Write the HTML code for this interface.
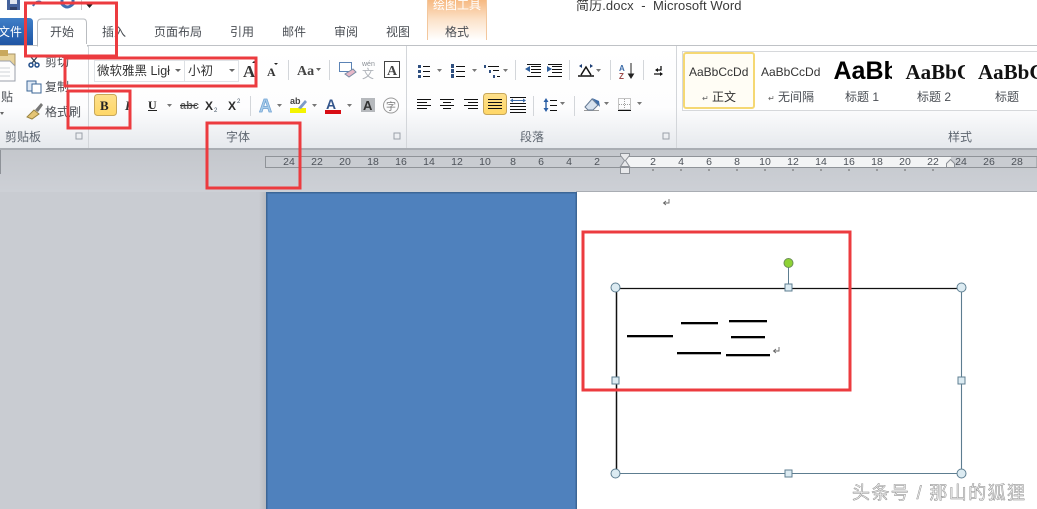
<!DOCTYPE html>
<html><head><meta charset="utf-8">
<style>
html,body{margin:0;padding:0;width:1037px;height:509px;overflow:hidden;background:#fff}
svg{display:block}
text{font-family:"Liberation Sans","Noto Sans CJK SC",sans-serif;fill:#4a4e54;font-size:12px}
.d{fill:#333}
.g{fill:#5e6670}
.l{stroke:#111;stroke-width:1;transform:translateY(.5px)}
.r{fill:none;stroke:#ec3b3f;stroke-width:3}
.h{fill:#dcebf2;stroke:#5f7f92;stroke-width:1}
.t{font-size:10.5px;fill:#4c5158;text-anchor:middle}
.sep{stroke:#d3d6da;stroke-width:1}
</style></head><body>
<svg width="1037" height="509" viewBox="0 0 1037 509" xmlns="http://www.w3.org/2000/svg">
<defs>
<linearGradient id="rb" x1="0" y1="0" x2="0" y2="1"><stop offset="0" stop-color="#fff"/><stop offset=".6" stop-color="#fdfdfe"/><stop offset="1" stop-color="#e6e9ed"/></linearGradient>
<linearGradient id="bg" x1="0" y1="0" x2="0" y2="1"><stop offset="0" stop-color="#c4c7cc"/><stop offset="1" stop-color="#cdd0d6"/></linearGradient>
<linearGradient id="file" x1="0" y1="0" x2="0" y2="1"><stop offset="0" stop-color="#3f7fc8"/><stop offset="1" stop-color="#1f55a3"/></linearGradient>
<linearGradient id="ctx" x1="0" y1="0" x2="0" y2="1"><stop offset="0" stop-color="#f6b981"/><stop offset=".5" stop-color="#fce3cb"/><stop offset="1" stop-color="#fff"/></linearGradient>
<linearGradient id="sel" x1="0" y1="0" x2="0" y2="1"><stop offset="0" stop-color="#fde08c"/><stop offset="1" stop-color="#ffd767"/></linearGradient>
<linearGradient id="shade" x1="0" y1="0" x2="1" y2="0"><stop offset="0" stop-color="#c9ccd2"/><stop offset="1" stop-color="#b4b7bd"/></linearGradient>
</defs>
<rect width="1037" height="509" fill="#fff"/>

<!-- quick access -->
<path d="M7 0h13v10H7z" fill="#44629c"/><rect x="10" y="0" width="7" height="4" fill="#dfe5ef"/><rect x="10" y="7" width="7" height="3" fill="#2f3f66"/>
<path d="M33 6q3-6 8-4" fill="none" stroke="#3f6fb0" stroke-width="2"/>
<path d="M62 0v4q5 6 11 0V0" fill="none" stroke="#3f6fb0" stroke-width="3"/>
<rect x="81" y="0" width="1" height="10" fill="#c8c8c8"/>
<path d="M86 4h7l-3.500 4z" fill="#222"/>

<!-- contextual tab -->
<path d="M427 0h60v40h-60z" fill="url(#ctx)"/>
<path d="M427.500 0v40M486.500 0v40" stroke="#f3c79d" fill="none"/>
<text x="457" y="9" text-anchor="middle" style="fill:#fff;font-size:12px">绘图工具</text>
<text x="457" y="36" text-anchor="middle">格式</text>
<text x="576" y="10" class="d" xml:space="preserve" style="font-size:13px;letter-spacing:.1px;fill:#3a3a3a">简历.docx  -  Microsoft Word</text>

<!-- ribbon -->
<rect x="0" y="46" width="1037" height="102" fill="url(#rb)"/>
<rect x="0" y="45" width="1037" height="1" fill="#bfc2c6"/>
<rect x="0" y="148" width="1037" height="2" fill="#a9adb3"/>
<path d="M0 18h29q4 0 4 4v23H0z" fill="url(#file)"/>
<text x="-2" y="36" style="fill:#fff;font-size:12px">文件</text>
<path d="M37.500 46V23q0-4 4-4h42q3 0 3 4v22l1 1z" fill="#fff" stroke="#b9bcc0"/>
<rect x="38" y="44" width="49" height="3" fill="#fff"/>
<text x="50" y="36">开始</text>
<text x="102" y="36">插入</text>
<text x="154" y="36">页面布局</text>
<text x="230" y="36">引用</text>
<text x="282" y="36">邮件</text>
<text x="334" y="36">审阅</text>
<text x="386" y="36">视图</text>

<!-- clipboard -->
<path d="M-3 54h18v27H-3z" fill="#e9d49c" stroke="#a89468"/>
<path d="M-3 61H10l5 5v15H-3z" fill="#fdfdfd" stroke="#9aa0aa"/>
<rect x="-2" y="50" width="10" height="6" fill="#c9a85c"/>
<path d="M0 68h10M0 72h10M0 76h10" stroke="#cfd3d8"/>
<text x="1" y="101">贴</text>
<path d="M0 112h4l-2 3z" fill="#666"/>
<path d="M31 57l5 6M37 57l-5 6" stroke="#345" stroke-width="1.300"/><circle cx="31" cy="65" r="2" fill="none" stroke="#24508c" stroke-width="1.500"/><circle cx="37" cy="65" r="2" fill="none" stroke="#24508c" stroke-width="1.500"/>
<text x="45" y="66">剪切</text>
<rect x="27" y="81" width="9" height="10" fill="#dfe9f5" stroke="#3d6797"/><rect x="32" y="84" width="9" height="9" fill="#fff" stroke="#3d6797"/>
<text x="45" y="91">复制</text>
<path d="M27 117l7-7 5 4-7 5z" fill="#e5c575" stroke="#9a8440"/><path d="M35 110l6-7 2 2-5 7z" fill="#777"/>
<text x="45" y="116">格式刷</text>
<text x="5" y="141" class="g">剪贴板</text>
<rect x="76" y="133" width="6" height="6" fill="none" stroke="#9aa0a8"/>
<line x1="88.500" y1="46" x2="88.500" y2="148" class="sep"/>

<!-- font -->
<rect x="94.500" y="60.500" width="144" height="21" fill="#fff" stroke="#e0e3e7"/>
<line x1="184.500" y1="60" x2="184.500" y2="81" stroke="#dde0e4"/>
<text x="97" y="75" class="d" style="font-size:12.500px">微软雅黑 Ligł</text>
<path d="M175 69h6l-3 3z" fill="#666"/>
<text x="188" y="75" class="d" style="font-size:12.500px">小初</text>
<path d="M229 69h6l-3 3z" fill="#666"/>
<text x="243" y="77" style="font-family:'Liberation Serif',serif;font-weight:bold;font-size:17px;fill:#333">A</text>
<path d="M252 63l2-2 2 2z" fill="#222"/>
<text x="267" y="76" style="font-family:'Liberation Serif',serif;font-weight:bold;font-size:12px;fill:#333">A</text>
<path d="M274 63h4l-2 2z" fill="#222"/>
<line x1="288.500" y1="60" x2="288.500" y2="80" class="sep"/>
<text x="297" y="75" style="font-family:'Liberation Serif',serif;font-weight:bold;font-size:14px;fill:#444">Aa</text>
<path d="M316 68h5l-2.500 3z" fill="#666"/>
<line x1="329.500" y1="60" x2="329.500" y2="80" class="sep"/>
<rect x="339.500" y="62.500" width="12" height="9" fill="#fff" stroke="#5b83b5"/>
<path d="M345 74l8-5 3 3-7 5z" fill="#e7b8c8" stroke="#7a8ca5"/>
<text x="362" y="66" style="font-size:7px;fill:#8a8f96">wén</text>
<text x="362" y="78" style="font-size:12px;fill:#b0b4ba">文</text>
<rect x="384.500" y="61.500" width="15" height="16" fill="#fff" stroke="#444"/>
<text x="387" y="75" style="font-family:'Liberation Serif',serif;font-weight:bold;font-size:14px;fill:#444">A</text>

<rect x="94.500" y="94.500" width="22" height="21" rx="3" fill="url(#sel)" stroke="#c7a75a"/>
<text x="100" y="110" style="font-family:'Liberation Serif',serif;font-weight:bold;font-size:13px;fill:#222">B</text>
<text x="125" y="110" style="font-family:'Liberation Serif',serif;font-weight:bold;font-style:italic;font-size:13px;fill:#333">I</text>
<text x="148" y="109" style="font-family:'Liberation Serif',serif;font-weight:bold;font-size:12px;fill:#222">U</text>
<rect x="148" y="110" width="9" height="1" fill="#222"/>
<path d="M167 104h5l-2.500 3z" fill="#777"/>
<text x="180" y="109" style="font-size:11px;font-weight:bold;fill:#666">abc</text>
<rect x="180" y="105" width="17" height="1" fill="#333"/>
<text x="205" y="110" style="font-size:12px;font-weight:bold;fill:#2c2c2c">X</text><text x="214" y="112" style="font-size:6px;fill:#456">2</text>
<text x="228" y="110" style="font-size:12px;font-weight:bold;fill:#2c2c2c">X</text><text x="237" y="103" style="font-size:6px;fill:#456">2</text>
<line x1="250.500" y1="96" x2="250.500" y2="116" class="sep"/>
<text x="259" y="112" style="font-size:18px;font-weight:bold;fill:#a9cdea;stroke:#6fa1d3;stroke-width:.7">A</text>
<path d="M277 104h5l-2.500 3z" fill="#777"/>
<rect x="290" y="108" width="16" height="5" fill="#f4f400"/>
<text x="290" y="104" style="font-size:9px;fill:#444;font-weight:bold">ab</text>
<path d="M298 108l7-8 2 2-6 7z" fill="#7d9bc7"/>
<path d="M312 104h5l-2.500 3z" fill="#777"/>
<text x="326" y="109" style="font-size:14px;font-weight:bold;fill:#33558c">A</text>
<rect x="325" y="110" width="16" height="4" fill="#d80d14"/>
<path d="M347 104h5l-2.500 3z" fill="#777"/>
<rect x="361" y="98" width="14" height="14" fill="#b6b9bd"/>
<text x="363" y="110" style="font-size:13px;font-weight:bold;fill:#333">A</text>
<circle cx="391" cy="105.500" r="7.500" fill="none" stroke="#999"/>
<text x="386" y="110" style="font-size:10px;fill:#777">字</text>
<text x="226" y="141" class="g">字体</text>
<rect x="394" y="133" width="6" height="6" fill="none" stroke="#9aa0a8"/>
<line x1="406.500" y1="46" x2="406.500" y2="148" class="sep"/>

<!-- paragraph row 1 -->
<g fill="#2f4f80"><rect x="418" y="65" width="3" height="3"/><rect x="418" y="70" width="3" height="3"/><rect x="418" y="75" width="3" height="3"/></g>
<path d="M423 66h7M423 71h7M423 76h7" class="l"/>
<path d="M437 69h5l-2.500 3z" fill="#777"/>
<g fill="#2f4f80"><rect x="451" y="64" width="3" height="4"/><rect x="451" y="69" width="3" height="4"/><rect x="451" y="74" width="3" height="4"/></g>
<path d="M456 66h9M456 71h9M456 76h9" class="l"/>
<path d="M472 69h5l-2.500 3z" fill="#777"/>
<rect x="484" y="65" width="2" height="3" fill="#2f4f80"/><rect x="489" y="70" width="2" height="3" fill="#2f4f80"/><rect x="493" y="75" width="2" height="3" fill="#2f4f80"/>
<path d="M488 66h11M493 70h6M497 76h3" class="l"/>
<path d="M503 69h5l-2.500 3z" fill="#777"/>
<line x1="515.500" y1="60" x2="515.500" y2="80" class="sep"/>
<path d="M531 66h10M531 69h10M531 72h10M527 76h14M527 64h14" class="l"/><path d="M525 69l5-3v6z" fill="#2f5f9c"/>
<path d="M552 66h10M552 69h10M552 72h10M548 76h14M548 64h14" class="l"/><path d="M552 69l-5-3v6z" fill="#2f5f9c"/>
<line x1="569.500" y1="60" x2="569.500" y2="80" class="sep"/>
<path d="M578 76h16M581 75l5-8 5 8" fill="none" stroke="#111" stroke-width="1.500"/><path d="M579 66l3-2v4zM593 66l-3-2v4z" fill="#1c3d75"/>
<path d="M596 69h5l-2.500 3z" fill="#777"/>
<line x1="610.500" y1="60" x2="610.500" y2="80" class="sep"/>
<text x="619" y="71" style="font-size:8px;font-weight:bold;fill:#3a6aa8">A</text>
<text x="619" y="79" style="font-size:8px;font-weight:bold;fill:#9c4a4a">Z</text>
<path d="M631 63v14M628.500 74l2.500 4 2.500-4z" stroke="#222" fill="#222"/>
<line x1="643.500" y1="60" x2="643.500" y2="80" class="sep"/>
<path d="M661 66v4h-5M654 74h7" stroke="#111" fill="none" stroke-width="1.300"/><path d="M658 68l-3 2 3 2zM660 72l3 2-3 2z" fill="#111"/>

<!-- paragraph row 2 -->
<path d="M417 99h14M417 102h10M417 105h14M417 108h10" class="l"/>
<path d="M440 99h14M443 102h8M440 105h14M443 108h8" class="l"/>
<path d="M464 99h14M468 102h10M464 105h14M468 108h10" class="l"/>
<rect x="483.500" y="93.500" width="23" height="21" rx="3" fill="url(#sel)" stroke="#c7a75a"/>
<path d="M488 99h14M488 102h14M488 105h14M488 108h14" class="l"/>
<path d="M510 97h16M510 103h16M510 106h16M510 109h16M510 112h16" class="l"/><path d="M511 100.500h14" stroke="#3a6aa8"/><path d="M510 100.500l3-2v4zM526 100.500l-3-2v4z" fill="#3a6aa8"/>
<line x1="533.500" y1="96" x2="533.500" y2="116" class="sep"/>
<path d="M546 101v8" stroke="#3a6aa8" stroke-width="1.500"/><path d="M543.500 102l2.500-4 2.500 4zM543.500 108l2.500 4 2.500-4z" fill="#2a5ea5"/>
<path d="M550 100h7M550 105h7M550 110h7" class="l"/><path d="M560 102h5l-2.500 3z" fill="#777"/>
<line x1="574.500" y1="96" x2="574.500" y2="116" class="sep"/>
<rect x="584" y="110" width="15" height="1" fill="#9a9a9a"/>
<path d="M585 107l7-8 6 6-5 5h-5z" fill="#d7e2ef" stroke="#667a94"/><path d="M592 98l7 3 1 6z" fill="#3d6ca8"/>
<path d="M604 102h5l-2.500 3z" fill="#777"/>
<rect x="618.500" y="98.500" width="12" height="11" fill="none" stroke="#8a8a8a" stroke-dasharray="1 1"/><path d="M624.500 99v10M619 104.500h11" stroke="#a0a0a0" stroke-dasharray="1 1"/><path d="M618 110.500h13" stroke="#111"/>
<path d="M637 102h5l-2.500 3z" fill="#777"/>
<text x="520" y="141" class="g">段落</text>
<rect x="663" y="133" width="6" height="6" fill="none" stroke="#9aa0a8"/>
<line x1="676.500" y1="46" x2="676.500" y2="148" class="sep"/>

<!-- styles -->
<rect x="682.500" y="51.500" width="355" height="59" fill="#fff" stroke="#d6d8db"/>
<rect x="684" y="53" width="70" height="55" rx="2" fill="#fffdf5" stroke="#f5d873" stroke-width="2"/>
<text x="689" y="76" class="d" style="font-size:12px">AaBbCcDd</text>
<text x="702" y="101" style="font-size:8px;fill:#666">↵</text>
<text x="712" y="101" class="d" style="font-size:12px">正文</text>
<text x="761" y="76" class="d" style="font-size:12px">AaBbCcDd</text>
<text x="768" y="101" style="font-size:8px;fill:#666">↵</text>
<text x="778" y="101" style="font-size:12px">无间隔</text>
<svg x="832" y="50" width="60" height="35"><text x="1.500" y="29" style="font-size:25px;font-weight:bold;fill:#000">AaBb</text></svg>
<text x="845" y="101" style="font-size:12px">标题 1</text>
<svg x="904" y="50" width="61" height="35"><text x="1.500" y="29" style="font-family:'Liberation Serif',serif;font-size:21px;font-weight:bold;fill:#111">AaBbC</text></svg>
<text x="917" y="101" style="font-size:12px">标题 2</text>
<svg x="977" y="50" width="60" height="35"><text x="1" y="29" style="font-family:'Liberation Serif',serif;font-size:21px;font-weight:bold;fill:#111">AaBbC</text></svg>
<text x="995" y="101" style="font-size:12px">标题</text>
<text x="948" y="141" class="g">样式</text>

<!-- workspace -->
<rect x="0" y="150" width="1037" height="42" fill="url(#bg)"/>
<rect x="0" y="192" width="267" height="317" fill="#c9ccd2"/>
<rect x="0" y="150" width="1" height="24" fill="#8e9298"/>
<rect x="259" y="192" width="8" height="317" fill="url(#shade)"/>
<!-- ruler -->
<rect x="265.500" y="156.500" width="771.500" height="11" fill="#c9ccd1" stroke="#8f9398"/>
<rect x="626" y="157" width="325" height="10" fill="#f3f4f5"/>
<g>
<text class="t" x="289" y="165">24</text><text class="t" x="317" y="165">22</text><text class="t" x="345" y="165">20</text><text class="t" x="373" y="165">18</text><text class="t" x="401" y="165">16</text><text class="t" x="429" y="165">14</text><text class="t" x="457" y="165">12</text><text class="t" x="485" y="165">10</text><text class="t" x="513" y="165">8</text><text class="t" x="541" y="165">6</text><text class="t" x="569" y="165">4</text><text class="t" x="597" y="165">2</text>
<text class="t" x="653" y="165">2</text><text class="t" x="681" y="165">4</text><text class="t" x="709" y="165">6</text><text class="t" x="737" y="165">8</text><text class="t" x="765" y="165">10</text><text class="t" x="793" y="165">12</text><text class="t" x="821" y="165">14</text><text class="t" x="849" y="165">16</text><text class="t" x="877" y="165">18</text><text class="t" x="905" y="165">20</text><text class="t" x="933" y="165">22</text><text class="t" x="961" y="165">24</text><text class="t" x="989" y="165">26</text><text class="t" x="1017" y="165">28</text>
</g>
<path d="M653 169v2M681 169v2M709 169v2M737 169v2M765 169v2M793 169v2M821 169v2M849 169v2M877 169v2M905 169v2M933 169v2" stroke="#666"/>
<path d="M620.500 153.500h9v2l-4 5 4 6h-9l4-6-4-5z" fill="#e8e9eb" stroke="#8c9096"/>
<rect x="620.500" y="167.500" width="9" height="6" fill="#e8e9eb" stroke="#8c9096"/>
<path d="M946.500 167.500v-4l4-4 4 4v4z" fill="#eceded" stroke="#8c9096"/>

<!-- page -->
<rect x="267" y="192" width="770" height="317" fill="#fff"/>
<rect x="576" y="191" width="461" height="1" fill="#a9adb3"/>
<rect x="267" y="192" width="309" height="317" fill="#4f81bd"/>
<rect x="266" y="192" width="311" height="1.500" fill="#3c6696"/>
<rect x="266" y="192" width="1.500" height="317" fill="#3c6696"/>
<rect x="575.500" y="192" width="1.500" height="317" fill="#3c6696"/>
<path d="M669 199v4h-5M666 201l-2.500 2 2.500 2" fill="none" stroke="#666" stroke-width=".9"/>

<!-- shape -->
<path d="M616 288.500H962" stroke="#111" stroke-width="1.300"/>
<path d="M616.500 288V473" stroke="#111" stroke-width="1.500"/>
<path d="M961.500 288V473M616 473.500H962" stroke="#5d7d90" stroke-width="1.100" fill="none"/>
<path d="M788.500 267V285" stroke="#5d7d90"/>
<circle cx="788.500" cy="263" r="4.500" fill="#8ed235" stroke="#6b8f55"/>
<g>
<circle class="h" cx="615.500" cy="287.500" r="4.500"/><circle class="h" cx="961.500" cy="287.500" r="4.500"/><circle class="h" cx="615.500" cy="473.500" r="4.500"/><circle class="h" cx="961.500" cy="473.500" r="4.500"/>
<rect class="h" x="785" y="284" width="7" height="7"/><rect class="h" x="612" y="377" width="7" height="7"/><rect class="h" x="958" y="377" width="7" height="7"/><rect class="h" x="785" y="470" width="7" height="7"/>
</g>
<g fill="#000">
<rect x="627" y="335" width="46" height="2.300"/>
<rect x="681" y="322" width="37" height="2.300"/>
<rect x="677" y="352" width="44" height="2.300"/>
<rect x="729" y="320" width="38" height="2.300"/>
<rect x="731" y="336" width="34" height="2.300"/>
<rect x="726" y="354" width="44" height="2.300"/>
</g>
<path d="M779 347v4h-5M776 349l-2.500 2 2.500 2" fill="none" stroke="#666" stroke-width=".9"/>

<!-- red annotations -->
<rect class="r" x="25.500" y="3" width="91" height="53"/>
<rect class="r" x="65" y="58" width="191" height="28"/>
<rect class="r" x="68" y="91" width="62" height="37"/>
<rect class="r" x="207" y="123" width="93" height="65"/>
<rect class="r" x="583" y="232" width="267" height="158"/>

<!-- watermark -->
<text x="852" y="499" xml:space="preserve" style="font-size:18px;fill:#eeeeee;stroke:#858585;stroke-width:.45;letter-spacing:1.4px">头条号 / 那山的狐狸</text>
</svg>
</body></html>
